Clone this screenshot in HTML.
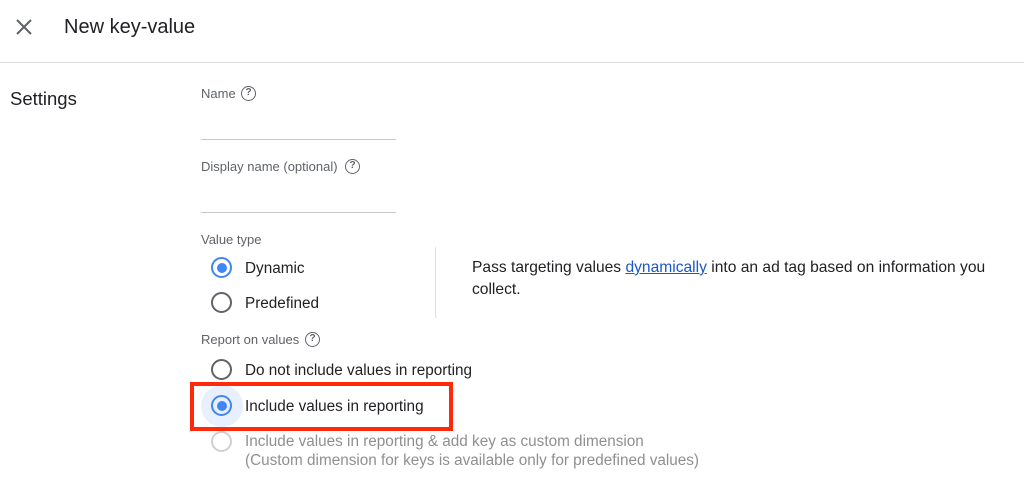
<!DOCTYPE html>
<html><head><meta charset="utf-8"><style>
*{margin:0;padding:0;box-sizing:border-box}
body{width:1024px;height:477px;background:#fff;position:relative;overflow:hidden;font-family:"Liberation Sans",Arial,sans-serif;color:#202124}
.a{position:absolute;white-space:nowrap;line-height:1}
.lbl{font-size:13px;color:#5f6368}
.t{font-size:15.3px;color:#202124}
.q{position:absolute;width:15px;height:15px;border:1.5px solid #5f6368;border-radius:50%;font-size:10px;color:#5f6368;text-align:center;line-height:12px;font-weight:bold}
.r{position:absolute;width:21px;height:21px;border:2px solid #5f6368;border-radius:50%}
.r.on{border-color:#4285f4}
.r.on::after{content:"";position:absolute;left:3.5px;top:3.5px;width:10px;height:10px;border-radius:50%;background:#4285f4}
.line{position:absolute;height:1px;background:#c8c8c8}
</style></head><body>
<svg class="a" style="left:14px;top:17px" width="20" height="20" viewBox="0 0 20 20"><path d="M3 3L17 17M17 3L3 17" stroke="#5f6368" stroke-width="2"/></svg>
<div class="a" style="left:64px;top:17px;font-size:20px;color:#202124">New key-value</div>
<div class="line" style="left:0;top:62px;width:1024px;background:#dadce0"></div>
<div class="a" style="left:10px;top:90px;font-size:18.5px;color:#202124">Settings</div>

<div class="a lbl" style="left:201px;top:87px">Name</div>
<div class="q" style="left:241px;top:86px">?</div>
<div class="line" style="left:201px;top:139px;width:195px"></div>

<div class="a lbl" style="left:201px;top:160px">Display name (optional)</div>
<div class="q" style="left:345px;top:159px">?</div>
<div class="line" style="left:201px;top:212px;width:195px"></div>

<div class="a lbl" style="left:201px;top:233px">Value type</div>
<div class="r on" style="left:211px;top:257px"></div>
<div class="a t" style="left:245px;top:261px">Dynamic</div>
<div class="r" style="left:211px;top:292px"></div>
<div class="a t" style="left:245px;top:296px">Predefined</div>
<div class="line" style="left:435px;top:247px;width:1px;height:71px;background:#e0e0e0"></div>
<div class="a t" style="left:472px;top:260px;font-size:15.6px">Pass targeting values <span style="color:#1a57c8;text-decoration:underline">dynamically</span> into an ad tag based on information you</div>
<div class="a t" style="left:472px;top:282px;font-size:15.6px">collect.</div>

<div class="a lbl" style="left:201px;top:333px">Report on values</div>
<div class="q" style="left:305px;top:332px">?</div>
<div class="r" style="left:211px;top:359px"></div>
<div class="a t" style="left:245px;top:363px">Do not include values in reporting</div>
<div style="position:absolute;left:201px;top:385px;width:42px;height:42px;border-radius:50%;background:#e8f0fe"></div>
<div class="r on" style="left:211px;top:395px"></div>
<div class="a t" style="left:245px;top:399px">Include values in reporting</div>
<div style="position:absolute;left:190px;top:382px;width:263px;height:49px;border:4px solid #ff2a0a"></div>
<div class="r" style="left:211px;top:431px;border-color:#d0d0d0"></div>
<div class="a t" style="left:245px;top:434px;color:#8f8f8f">Include values in reporting &amp; add key as custom dimension</div>
<div class="a t" style="left:245px;top:453px;color:#8f8f8f">(Custom dimension for keys is available only for predefined values)</div>
</body></html>
